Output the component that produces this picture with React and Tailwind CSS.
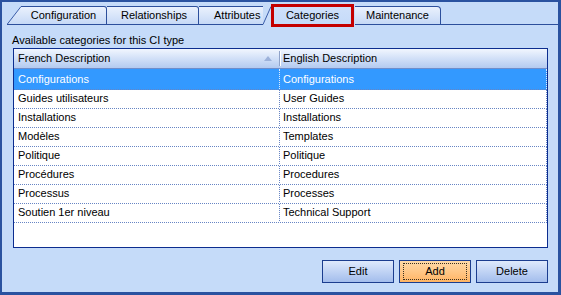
import React from "react";

const rows = [
  ["Configurations", "Configurations"],
  ["Guides utilisateurs", "User Guides"],
  ["Installations", "Installations"],
  ["Modèles", "Templates"],
  ["Politique", "Politique"],
  ["Procédures", "Procedures"],
  ["Processus", "Processes"],
  ["Soutien 1er niveau", "Technical Support"],
];

function Slant({ w, selected }) {
  // diagonal left edge of a tab
  return (
    <svg width={w} height="19" className="block shrink-0">
      <defs>
        <linearGradient id={selected ? "gs" : "gt"} x1="0" y1="0" x2="0" y2="1">
          <stop offset="0" stopColor={selected ? "#cfe0fa" : "#eaf1fd"} />
          <stop offset="1" stopColor={selected ? "#c5dbf9" : "#c6d9f6"} />
        </linearGradient>
      </defs>
      <polygon points={`0,19 ${w},0 ${w},19`} fill={`url(#${selected ? "gs" : "gt"})`} />
      <line x1="0" y1="18.5" x2={w} y2="0.5" stroke="#3a5ca8" strokeWidth="1" />
      {!selected && <line x1="0" y1="18.5" x2={w} y2="18.5" stroke="#2c4f9c" strokeWidth="1" />}
    </svg>
  );
}

function Button({ label, active }) {
  return (
    <div
      className={
        "w-[72px] h-[23px] border border-[#1b3d8f] flex items-center justify-center " +
        (active
          ? "bg-linear-to-b from-[#ffdaa8] to-[#ffb463]"
          : "bg-linear-to-b from-[#dfeafc] to-[#a3bdec]")
      }
    >
      {active ? (
        <div className="w-[64px] h-[17px] border border-dotted border-[#3a3020] flex items-center justify-center">
          {label}
        </div>
      ) : (
        label
      )}
    </div>
  );
}

export default function App() {
  return (
    <div className="w-[561px] h-[295px] bg-[#c5dbf9] border-t-2 border-l-2 border-r-[3px] border-b-[3px] border-[#2a52a0] flex flex-col font-['Liberation_Sans',Arial,sans-serif] text-[11px] text-black leading-[13px]">
      {/* tab strip */}
      <div className="flex items-end h-[23px] pl-[5px]">
        <Slant w={14} />
        <div className="w-[86px] h-[19px] border-t border-r border-b border-[#2c4f9c] rounded-tr-[3px] bg-linear-to-b from-[#eaf1fd] to-[#c6d9f6] flex items-center justify-center pb-[1px]">
          Configuration
        </div>
        <div className="w-[92px] h-[19px] border-t border-r border-b border-[#2c4f9c] rounded-tr-[3px] bg-linear-to-b from-[#eaf1fd] to-[#c6d9f6] flex items-center justify-center pb-[1px] pl-[3px]">
          Relationships
        </div>
        <div className="w-[64px] h-[19px] border-t border-b border-[#2c4f9c] bg-linear-to-b from-[#eaf1fd] to-[#c6d9f6] flex items-center pl-[15px] pb-[1px]">
          Attributes
        </div>
        <Slant w={8} selected />
        <div className="relative z-10 w-[83px] h-[23px] mb-[-2px] border-[3px] border-[#c40000] bg-linear-to-b from-[#cfe0fa] to-[#c5dbf9] flex items-center justify-center pb-[1px]">
          Categories
        </div>
        <div className="ml-[1px] w-[86px] h-[19px] border-t border-r border-b border-[#2c4f9c] rounded-tr-[4px] bg-linear-to-b from-[#eaf1fd] to-[#c6d9f6] flex items-center justify-center pb-[1px]">
          Maintenance
        </div>
        <div className="flex-1 h-[19px] border-b border-[#2c4f9c]" />
      </div>

      {/* tab page */}
      <div className="flex-1 flex flex-col pl-[11px] pr-[10px] pt-[9px]">
        <div className="h-[13px] ml-[-1px]">Available categories for this CI type</div>

        <div className="mt-[1px] h-[200px] border border-[#0c2d8f] bg-white flex flex-col">
          <div className="h-[20px] flex border-b border-[#6f8dca] bg-linear-to-b from-[#f1f6fe] to-[#b3caf0]">
            <div className="w-[265px] flex items-center pl-[4px]">
              <span>French Description</span>
              <svg width="8" height="5" className="ml-auto mr-[7px] block">
                <polygon points="0,5 4,0 8,5" fill="#9db2da" />
              </svg>
            </div>
            <div className="w-[1px] h-[15px] self-center bg-[#8fa2c8]" />
            <div className="w-[1px] h-[15px] self-center bg-white" />
            <div className="flex-1 flex items-center pl-[2px]">English Description</div>
          </div>

          {rows.map(([fr, en], i) => (
            <div
              key={fr}
              className={
                "flex border-b border-dotted border-[#6785c4] " +
                (i === 0 ? "h-[21px] bg-[#3399ff] text-white" : "h-[19px] pb-[1px]")
              }
            >
              <div
                className={
                  "w-[266px] flex items-center pl-[4px] border-r border-dotted " +
                  (i === 0 ? "border-[#dfeeff]" : "border-[#6785c4]")
                }
              >
                {fr}
              </div>
              <div
                className={
                  "flex-1 flex items-center pl-[3px] border-r border-dotted " +
                  (i === 0 ? "border-[#dfeeff]" : "border-[#6785c4]")
                }
              >
                {en}
              </div>
            </div>
          ))}
        </div>

        <div className="mt-[12px] flex justify-end gap-[5px]">
          <Button label="Edit" />
          <Button label="Add" active />
          <Button label="Delete" />
        </div>
      </div>
    </div>
  );
}
